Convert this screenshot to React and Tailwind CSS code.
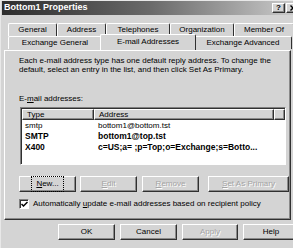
import React from "react";

const raised =
  "border border-t-white border-l-white border-r-[#303030] border-b-[#303030] shadow-[inset_-1px_-1px_0_#8a8a8a]";

function Btn({ children, disabled, focus, className = "" }) {
  return (
    <div
      className={`flex h-[16px] items-center justify-center bg-[#d4d4d4] ${raised} ${className}`}
    >
      <span
        className={`px-[2px] leading-[10px] ${
          focus ? "outline outline-1 outline-dotted outline-offset-[2px] outline-black" : ""
        } ${disabled ? "text-[#a4a4a4] text-shadow-[1px_1px_0_#ffffff]" : "text-black"}`}
      >
        {children}
      </span>
    </div>
  );
}

function Tab({ label, w, selected }) {
  return (
    <div
      style={{ width: w }}
      className={`flex shrink-0 items-center justify-center rounded-t-[2px] border-t border-l border-r border-t-white border-l-white border-r-[#303030] bg-[#d4d4d4] ${
        selected ? "relative z-10 -mx-[2px] -mt-[2px] h-[16px] pb-[2px]" : "h-[13px]"
      }`}
    >
      {label}
    </div>
  );
}

const rows = [
  { type: "smtp", addr: "bottom1@bottom.tst", bold: false },
  { type: "SMTP", addr: "bottom1@top.tst", bold: true },
  { type: "X400", addr: "c=US;a= ;p=Top;o=Exchange;s=Botto...", bold: true },
];

export default function App() {
  return (
    <div className="relative h-[248px] w-[293px] overflow-hidden bg-[#d4d4d4] font-['Liberation_Sans',Arial,sans-serif] text-[8px] text-black">
      <div className="flex h-[248px] w-[300px] flex-col border-l border-t border-l-[#e8e8e8] border-t-[#e8e8e8]">
        {/* title bar */}
        <div className="mx-[1px] flex h-[14px] items-center bg-linear-to-r from-[#2e2e2e] via-[#6a6a6a] to-[#cfcfcf] pl-[2px]">
          <span className="text-[9px] font-bold text-white">Bottom1 Properties</span>
          <div className="ml-auto flex gap-[1px]">
            <div className={`flex h-[10px] w-[13px] items-center justify-center bg-[#d4d4d4] text-[8px] font-bold leading-none ${raised}`}>
              ?
            </div>
            <div className={`flex h-[10px] w-[13px] items-center justify-center bg-[#d4d4d4] ${raised}`}>
              <svg width="6" height="6" viewBox="0 0 6 6">
                <path d="M0.5 0.5 L5.5 5.5 M5.5 0.5 L0.5 5.5" stroke="#000" strokeWidth="1.4" />
              </svg>
            </div>
          </div>
        </div>

        {/* tabs */}
        <div className="mt-[8px] flex pl-[7px]">
          <Tab label="General" w={49} />
          <Tab label="Address" w={49} />
          <Tab label="Telephones" w={64} />
          <Tab label="Organization" w={64} />
          <Tab label="Member Of" w={60} />
        </div>
        <div className="flex pl-[7px]">
          <Tab label="Exchange General" w={94} />
          <Tab label="E-mail Addresses" w={96} selected />
          <Tab label="Exchange Advanced" w={98} />
        </div>

        {/* panel */}
        <div className="ml-[3px] flex h-[170px] w-[287px] flex-col border border-t-white border-l-white border-r-[#303030] border-b-[#303030] pl-[14px] shadow-[inset_-1px_-1px_0_#8a8a8a]">
          <p className="mt-[6px] leading-[8.5px]">
            Each e-mail address type has one default reply address. To change the
            <br />
            default, select an entry in the list, and then click Set As Primary.
          </p>
          <p className="mt-[20px] leading-[9px]">
            E-<span className="underline">m</span>ail addresses:
          </p>

          {/* list */}
          <div className="mt-[4px] ml-[1px] flex h-[58px] w-[266px] flex-col border border-t-[#808080] border-l-[#808080] border-r-white border-b-white bg-white shadow-[inset_1px_1px_0_#303030]">
            <div className="ml-[1px] mt-[1px] flex h-[11px]">
              <div className={`flex w-[72px] items-center bg-[#d4d4d4] pl-[4px] ${raised}`}>Type</div>
              <div className={`flex w-[180px] items-center bg-[#d4d4d4] pl-[4px] ${raised}`}>Address</div>
              <div className={`flex flex-1 bg-[#d4d4d4] ${raised}`} />
            </div>
            <div className="mt-[1px] flex flex-col">
              {rows.map((r) => (
                <div
                  key={r.type}
                  className={`flex h-[10.5px] items-center ${r.bold ? "font-bold text-[8.5px]" : ""}`}
                >
                  <span className="w-[73px] pl-[4px]">{r.type}</span>
                  <span className="pl-[4px]">{r.addr}</span>
                </div>
              ))}
            </div>
          </div>

          {/* buttons */}
          <div className="mt-[11px] flex">
            <Btn focus className="w-[57px]">
              <span className="underline">N</span>ew...
            </Btn>
            <Btn disabled className="ml-[4px] w-[57px]">
              <span className="underline">E</span>dit
            </Btn>
            <Btn disabled className="ml-[5px] w-[57px]">
              <span className="underline">R</span>emove
            </Btn>
            <Btn disabled className="ml-[9px] w-[81px]">
              <span className="underline">S</span>et As Primary
            </Btn>
          </div>

          {/* checkbox */}
          <div className="mt-[6px] flex items-center">
            <div className="flex h-[10px] w-[10px] items-center justify-center border border-t-[#808080] border-l-[#808080] border-r-white border-b-white bg-white shadow-[inset_1px_1px_0_#303030]">
              <svg width="7" height="7" viewBox="0 0 7 7">
                <path d="M0.5 3 L2.5 5 L6.5 1" stroke="#000" strokeWidth="1.5" fill="none" />
              </svg>
            </div>
            <span className="ml-[4px]">
              Automatically <span className="underline">u</span>pdate e-mail addresses based on recipient policy
            </span>
          </div>
        </div>

        {/* bottom buttons */}
        <div className="mt-[4px] flex pl-[57px]">
          <Btn className="w-[57px]">OK</Btn>
          <Btn className="ml-[5px] w-[57px]">Cancel</Btn>
          <Btn disabled className="ml-[5px] w-[56px]">
            Apply
          </Btn>
          <Btn className="ml-[5px] w-[56px]">Help</Btn>
        </div>
      </div>
    </div>
  );
}
